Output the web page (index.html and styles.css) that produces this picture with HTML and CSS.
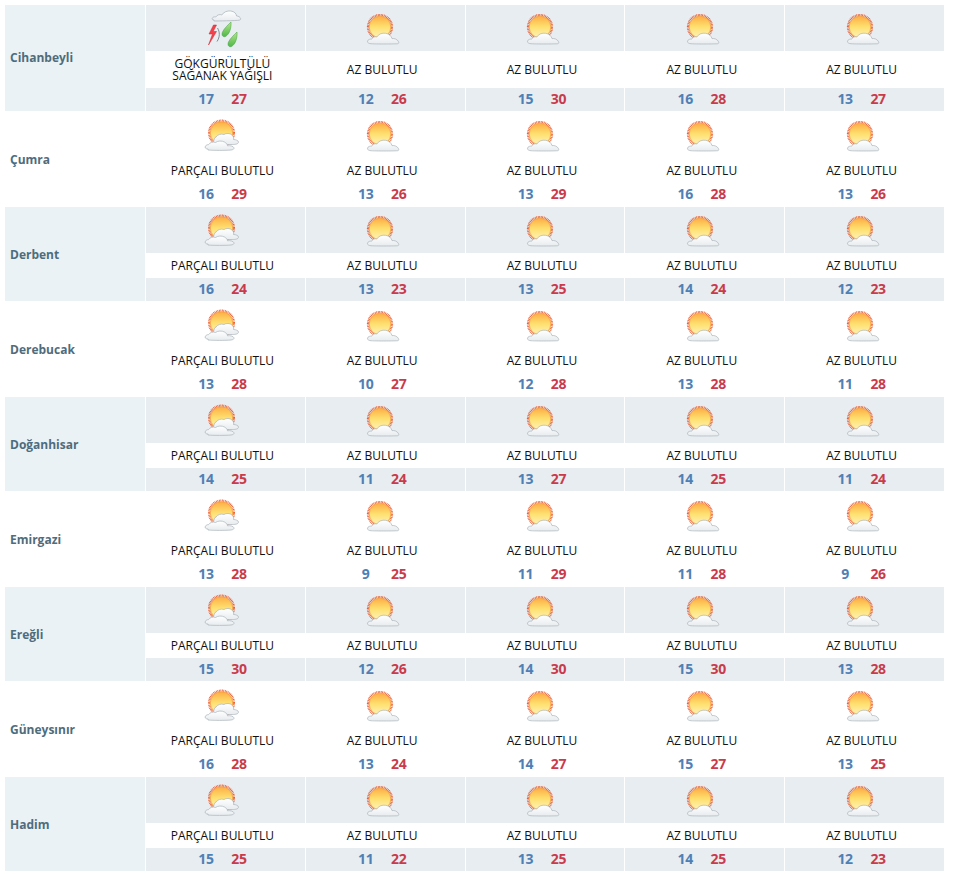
FILE: index.html
```html
<!DOCTYPE html>
<html lang="tr">
<head>
<meta charset="utf-8">
<title>Hava Durumu</title>
<link rel="stylesheet" href="styles.css">
</head>
<body>
<svg class="defs" width="0" height="0" aria-hidden="true">
  <defs>
    <linearGradient id="sunFill" x1="0" y1="0" x2="0" y2="1">
      <stop offset="0" stop-color="#fcae45"/>
      <stop offset="0.5" stop-color="#ffe070"/>
      <stop offset="1" stop-color="#fff2b8"/>
    </linearGradient>
    <linearGradient id="cloudFill" x1="0" y1="0" x2="0" y2="1">
      <stop offset="0" stop-color="#ffffff"/>
      <stop offset="1" stop-color="#e8ecef"/>
    </linearGradient>
    <linearGradient id="dropFill" x1="0" y1="0" x2="0" y2="1">
      <stop offset="0" stop-color="#b8e68a"/>
      <stop offset="1" stop-color="#4fb84a"/>
    </linearGradient>
    <symbol id="az" viewBox="0 0 46 46">
      <circle cx="20" cy="22" r="12" fill="none" stroke="#e8552a" stroke-width="2.200" stroke-dasharray="0.8 0.7"/>
      <circle cx="20" cy="22" r="10.800" fill="url(#sunFill)" stroke="#f79a3a" stroke-width="0.800"/>
      <path d="M8.500 38c-1.600-.4-1.400-3 .8-3.600 1-.3 1.600-.3 2.200-.1 1-2.300 3.400-3 5.300-2.300 1.500-2.800 5.400-4.400 9-3.700 3.400.6 5.600 2.800 6.200 5.300 2.300-.4 5.300.6 6.500 3 .6 1.300.2 1.800-.7 2.100-.9.3-27 .5-28.300-.2z" fill="url(#cloudFill)" stroke="#aab3b9" stroke-width="0.700"/>
    </symbol>
    <symbol id="parcali" viewBox="0 0 46 46">
      <circle cx="21.500" cy="21" r="12.400" fill="none" stroke="#e8552a" stroke-width="2.200" stroke-dasharray="0.8 0.7"/>
      <circle cx="21.500" cy="21" r="11.200" fill="url(#sunFill)" stroke="#f79a3a" stroke-width="0.800"/>
      <path d="M16 25c1.500-2.500 5-3.500 8-2.500 2-1.500 6-1.500 8 .5 1.500 1.500 2 3 1.500 4.500 2 0 5 1 5 2.500 0 2-3 2.500-6 2.500H16c-2 0-3-1-2.500-3 .5-2 1-4 2.500-4.500z" fill="url(#cloudFill)" stroke="#aab3b9" stroke-width="0.700"/>
      <path d="M8 37c-2.500 0-3.500-1.500-2.500-3 .7-1 2-1.500 3-1.300 1.500-2.500 4.500-3.200 7-2.200 2-1.700 6.500-2 9-.5 2 1.200 3 2.500 3 3.800 2.500-.5 6 .5 6.500 2 .3 1.200-1 2-3 2.200-5 .5-18 .5-23 0z" fill="url(#cloudFill)" stroke="#aab3b9" stroke-width="0.700"/>
    </symbol>
    <symbol id="firtina" viewBox="0 0 46 46">
      <path d="M14 15c-2 0-2.500-1.800-1-2.700 1-.6 2-.6 2.800-.3 1.200-2.200 4-3 6-2 1.500-2.800 5.500-4.500 9-4 3.600.5 5.500 2.500 5.800 5 1.800 0 3.600 1 4 2.500.3 1-.5 1.500-1.500 1.700-3 .5-22 .8-25 .8z" fill="url(#cloudFill)" stroke="#a8b0b6" stroke-width="0.700"/>
      <path d="M13.500 20 9 29h3.500L8.500 40l8-13.500h-3.300l3.300-6.500z" fill="#f4404a" stroke="#d0242e" stroke-width="0.500"/>
      <path d="M17.500 23c2.500 4 2.500 9-.5 13.500" fill="none" stroke="#77828a" stroke-width="0.900"/>
      <path d="M31 17c.4 5-1 12-5.500 14.500-3 1-4.200-1.800-3-4.500 1.500-3.500 6-7.500 8.500-10z" fill="url(#dropFill)" stroke="#3fa03f" stroke-width="0.500"/>
      <path d="M37 27c.4 5-1 12-5.500 14.500-3 1-4.200-1.800-3-4.500 1.500-3.500 6-7.500 8.500-10z" fill="url(#dropFill)" stroke="#3fa03f" stroke-width="0.500"/>
    </symbol>
  </defs>
</svg>
<main class="table">

<section class="row shaded tall">
  <h3 class="name">Cihanbeyli</h3>
  <div class="day"><svg class="icon"><use href="#firtina"/></svg><p class="desc">GÖKGÜRÜLTÜLÜ<br>SAĞANAK YAĞIŞLI</p><p class="temps"><span class="lo">17</span><span class="hi">27</span></p></div>
  <div class="day"><svg class="icon"><use href="#az"/></svg><p class="desc">AZ BULUTLU</p><p class="temps"><span class="lo">12</span><span class="hi">26</span></p></div>
  <div class="day"><svg class="icon"><use href="#az"/></svg><p class="desc">AZ BULUTLU</p><p class="temps"><span class="lo">15</span><span class="hi">30</span></p></div>
  <div class="day"><svg class="icon"><use href="#az"/></svg><p class="desc">AZ BULUTLU</p><p class="temps"><span class="lo">16</span><span class="hi">28</span></p></div>
  <div class="day"><svg class="icon"><use href="#az"/></svg><p class="desc">AZ BULUTLU</p><p class="temps"><span class="lo">13</span><span class="hi">27</span></p></div>
</section>

<section class="row">
  <h3 class="name">Çumra</h3>
  <div class="day"><svg class="icon"><use href="#parcali"/></svg><p class="desc">PARÇALI BULUTLU</p><p class="temps"><span class="lo">16</span><span class="hi">29</span></p></div>
  <div class="day"><svg class="icon"><use href="#az"/></svg><p class="desc">AZ BULUTLU</p><p class="temps"><span class="lo">13</span><span class="hi">26</span></p></div>
  <div class="day"><svg class="icon"><use href="#az"/></svg><p class="desc">AZ BULUTLU</p><p class="temps"><span class="lo">13</span><span class="hi">29</span></p></div>
  <div class="day"><svg class="icon"><use href="#az"/></svg><p class="desc">AZ BULUTLU</p><p class="temps"><span class="lo">16</span><span class="hi">28</span></p></div>
  <div class="day"><svg class="icon"><use href="#az"/></svg><p class="desc">AZ BULUTLU</p><p class="temps"><span class="lo">13</span><span class="hi">26</span></p></div>
</section>

<section class="row shaded">
  <h3 class="name">Derbent</h3>
  <div class="day"><svg class="icon"><use href="#parcali"/></svg><p class="desc">PARÇALI BULUTLU</p><p class="temps"><span class="lo">16</span><span class="hi">24</span></p></div>
  <div class="day"><svg class="icon"><use href="#az"/></svg><p class="desc">AZ BULUTLU</p><p class="temps"><span class="lo">13</span><span class="hi">23</span></p></div>
  <div class="day"><svg class="icon"><use href="#az"/></svg><p class="desc">AZ BULUTLU</p><p class="temps"><span class="lo">13</span><span class="hi">25</span></p></div>
  <div class="day"><svg class="icon"><use href="#az"/></svg><p class="desc">AZ BULUTLU</p><p class="temps"><span class="lo">14</span><span class="hi">24</span></p></div>
  <div class="day"><svg class="icon"><use href="#az"/></svg><p class="desc">AZ BULUTLU</p><p class="temps"><span class="lo">12</span><span class="hi">23</span></p></div>
</section>

<section class="row">
  <h3 class="name">Derebucak</h3>
  <div class="day"><svg class="icon"><use href="#parcali"/></svg><p class="desc">PARÇALI BULUTLU</p><p class="temps"><span class="lo">13</span><span class="hi">28</span></p></div>
  <div class="day"><svg class="icon"><use href="#az"/></svg><p class="desc">AZ BULUTLU</p><p class="temps"><span class="lo">10</span><span class="hi">27</span></p></div>
  <div class="day"><svg class="icon"><use href="#az"/></svg><p class="desc">AZ BULUTLU</p><p class="temps"><span class="lo">12</span><span class="hi">28</span></p></div>
  <div class="day"><svg class="icon"><use href="#az"/></svg><p class="desc">AZ BULUTLU</p><p class="temps"><span class="lo">13</span><span class="hi">28</span></p></div>
  <div class="day"><svg class="icon"><use href="#az"/></svg><p class="desc">AZ BULUTLU</p><p class="temps"><span class="lo">11</span><span class="hi">28</span></p></div>
</section>

<section class="row shaded">
  <h3 class="name">Doğanhisar</h3>
  <div class="day"><svg class="icon"><use href="#parcali"/></svg><p class="desc">PARÇALI BULUTLU</p><p class="temps"><span class="lo">14</span><span class="hi">25</span></p></div>
  <div class="day"><svg class="icon"><use href="#az"/></svg><p class="desc">AZ BULUTLU</p><p class="temps"><span class="lo">11</span><span class="hi">24</span></p></div>
  <div class="day"><svg class="icon"><use href="#az"/></svg><p class="desc">AZ BULUTLU</p><p class="temps"><span class="lo">13</span><span class="hi">27</span></p></div>
  <div class="day"><svg class="icon"><use href="#az"/></svg><p class="desc">AZ BULUTLU</p><p class="temps"><span class="lo">14</span><span class="hi">25</span></p></div>
  <div class="day"><svg class="icon"><use href="#az"/></svg><p class="desc">AZ BULUTLU</p><p class="temps"><span class="lo">11</span><span class="hi">24</span></p></div>
</section>

<section class="row">
  <h3 class="name">Emirgazi</h3>
  <div class="day"><svg class="icon"><use href="#parcali"/></svg><p class="desc">PARÇALI BULUTLU</p><p class="temps"><span class="lo">13</span><span class="hi">28</span></p></div>
  <div class="day"><svg class="icon"><use href="#az"/></svg><p class="desc">AZ BULUTLU</p><p class="temps"><span class="lo">9</span><span class="hi">25</span></p></div>
  <div class="day"><svg class="icon"><use href="#az"/></svg><p class="desc">AZ BULUTLU</p><p class="temps"><span class="lo">11</span><span class="hi">29</span></p></div>
  <div class="day"><svg class="icon"><use href="#az"/></svg><p class="desc">AZ BULUTLU</p><p class="temps"><span class="lo">11</span><span class="hi">28</span></p></div>
  <div class="day"><svg class="icon"><use href="#az"/></svg><p class="desc">AZ BULUTLU</p><p class="temps"><span class="lo">9</span><span class="hi">26</span></p></div>
</section>

<section class="row shaded">
  <h3 class="name">Ereğli</h3>
  <div class="day"><svg class="icon"><use href="#parcali"/></svg><p class="desc">PARÇALI BULUTLU</p><p class="temps"><span class="lo">15</span><span class="hi">30</span></p></div>
  <div class="day"><svg class="icon"><use href="#az"/></svg><p class="desc">AZ BULUTLU</p><p class="temps"><span class="lo">12</span><span class="hi">26</span></p></div>
  <div class="day"><svg class="icon"><use href="#az"/></svg><p class="desc">AZ BULUTLU</p><p class="temps"><span class="lo">14</span><span class="hi">30</span></p></div>
  <div class="day"><svg class="icon"><use href="#az"/></svg><p class="desc">AZ BULUTLU</p><p class="temps"><span class="lo">15</span><span class="hi">30</span></p></div>
  <div class="day"><svg class="icon"><use href="#az"/></svg><p class="desc">AZ BULUTLU</p><p class="temps"><span class="lo">13</span><span class="hi">28</span></p></div>
</section>

<section class="row">
  <h3 class="name">Güneysınır</h3>
  <div class="day"><svg class="icon"><use href="#parcali"/></svg><p class="desc">PARÇALI BULUTLU</p><p class="temps"><span class="lo">16</span><span class="hi">28</span></p></div>
  <div class="day"><svg class="icon"><use href="#az"/></svg><p class="desc">AZ BULUTLU</p><p class="temps"><span class="lo">13</span><span class="hi">24</span></p></div>
  <div class="day"><svg class="icon"><use href="#az"/></svg><p class="desc">AZ BULUTLU</p><p class="temps"><span class="lo">14</span><span class="hi">27</span></p></div>
  <div class="day"><svg class="icon"><use href="#az"/></svg><p class="desc">AZ BULUTLU</p><p class="temps"><span class="lo">15</span><span class="hi">27</span></p></div>
  <div class="day"><svg class="icon"><use href="#az"/></svg><p class="desc">AZ BULUTLU</p><p class="temps"><span class="lo">13</span><span class="hi">25</span></p></div>
</section>

<section class="row shaded">
  <h3 class="name">Hadim</h3>
  <div class="day"><svg class="icon"><use href="#parcali"/></svg><p class="desc">PARÇALI BULUTLU</p><p class="temps"><span class="lo">15</span><span class="hi">25</span></p></div>
  <div class="day"><svg class="icon"><use href="#az"/></svg><p class="desc">AZ BULUTLU</p><p class="temps"><span class="lo">11</span><span class="hi">22</span></p></div>
  <div class="day"><svg class="icon"><use href="#az"/></svg><p class="desc">AZ BULUTLU</p><p class="temps"><span class="lo">13</span><span class="hi">25</span></p></div>
  <div class="day"><svg class="icon"><use href="#az"/></svg><p class="desc">AZ BULUTLU</p><p class="temps"><span class="lo">14</span><span class="hi">25</span></p></div>
  <div class="day"><svg class="icon"><use href="#az"/></svg><p class="desc">AZ BULUTLU</p><p class="temps"><span class="lo">12</span><span class="hi">23</span></p></div>
</section>

</main>
</body>
</html>
```
FILE: styles.css
```css
* { box-sizing: border-box; }

html, body { margin: 0; background: #fff; }

body {
  padding: 5px 0 0 5px;
  font-family: "Open Sans", "Liberation Sans", sans-serif;
  color: #111;
  overflow: hidden;
  height: 878px;
}

.defs { display: block; }

.table {
  width: 939px;
  display: flex;
  flex-direction: column;
  gap: 1px;
}

.row {
  display: grid;
  grid-template-columns: 140px repeat(5, minmax(0, 1fr));
  column-gap: 1px;
  height: 94px;
}

.row.tall { height: 106px; }

.name {
  margin: 0;
  padding-left: 5px;
  display: flex;
  align-items: center;
  font-size: 12px;
  font-weight: 700;
  color: #4f6c7c;
}

.tall .name { padding-bottom: 2px; }

.shaded .name { background: #eaf2f6; }

.day {
  display: grid;
  grid-template-rows: 46px 1fr 23px;
  min-width: 0;
}

.icon {
  display: block;
  width: 46px;
  height: 46px;
  justify-self: center;
  position: relative;
  left: -2px;
  filter: blur(0.25px);
}

.shaded .day { background: #e7edf1; }

.desc {
  margin: 0;
  background: #fff;
  padding: 0 6px 0 0;
  display: flex;
  align-items: center;
  justify-content: center;
  text-align: center;
  font-size: 12px;
  line-height: 12px;
}

.temps {
  margin: 0;
  padding: 0 6px 2px 0;
  display: flex;
  justify-content: center;
  align-items: center;
  font-size: 14px;
  font-weight: 700;
  letter-spacing: -0.3px;
}

.lo, .hi { width: 33px; text-align: center; }
.lo { color: #4f80b5; }
.hi { color: #c93b4b; }
```
